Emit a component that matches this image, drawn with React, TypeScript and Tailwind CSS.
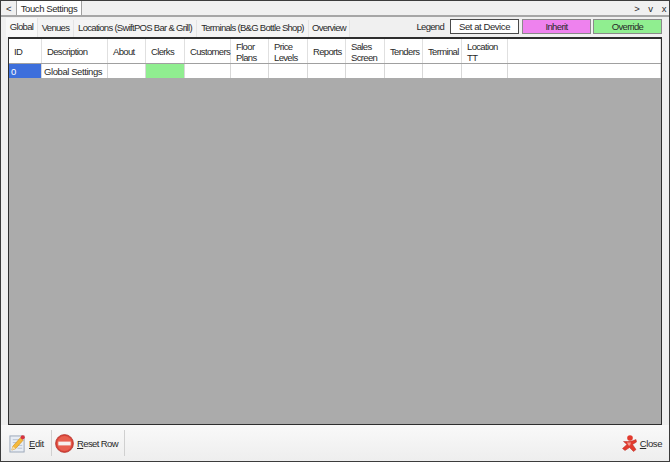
import React from 'react';

const COLUMNS: { label: string[]; width: string; cell?: string; text?: string }[] = [
  { label: ['ID'], width: 'w-[33px]', cell: 'bg-[#3d6fdc] text-white', text: '0' },
  { label: ['Description'], width: 'w-[66px]', text: 'Global Settings' },
  { label: ['About'], width: 'w-[38px]' },
  { label: ['Clerks'], width: 'w-[39px]', cell: 'bg-[#90ee90]' },
  { label: ['Customers'], width: 'w-[46px]' },
  { label: ['Floor', 'Plans'], width: 'w-[38px]' },
  { label: ['Price', 'Levels'], width: 'w-[39px]' },
  { label: ['Reports'], width: 'w-[38px]' },
  { label: ['Sales', 'Screen'], width: 'w-[39px]' },
  { label: ['Tenders'], width: 'w-[38px]' },
  { label: ['Terminal'], width: 'w-[39px]' },
  { label: ['Location', 'TT'], width: 'w-[46px]' },
  { label: [], width: 'flex-1' },
];

const TABS = [
  { label: 'Global', width: 'w-[32px]', active: true },
  { label: 'Venues', width: 'w-[36px]' },
  { label: 'Locations (SwiftPOS Bar & Grill)', width: 'w-[123px]' },
  { label: 'Terminals (B&G Bottle Shop)', width: 'w-[112px]' },
  { label: 'Overview', width: 'w-[41px]' },
];

function EditIcon() {
  return (
    <svg width="17" height="19" viewBox="0 0 18 20">
      <rect x="1" y="2" width="15" height="17" fill="#e8edf4" stroke="#9aa7b8" />
      <path d="M4 6h8M4 9h9M8 12h6M9 15h5" stroke="#b4c0d0" />
      <path d="M3 17l1-4L12 4l3 2.5-8 9z" fill="#f5b93a" stroke="#c98a1c" strokeWidth="0.6" />
      <path d="M3 17l1-4 3 2.5z" fill="#f4dcae" />
      <circle cx="14.5" cy="3.5" r="2.2" fill="#d8343f" />
    </svg>
  );
}

function ResetIcon() {
  return (
    <svg width="19" height="19" viewBox="0 0 20 20">
      <circle cx="10" cy="10" r="9.4" fill="#d9443a" stroke="#b22f28" strokeWidth="0.8" />
      <circle cx="10" cy="10" r="7.8" fill="#e8604f" />
      <rect x="3.5" y="8" width="13" height="4" fill="#f6f1ee" />
    </svg>
  );
}

function CloseIcon() {
  return (
    <svg width="15" height="17" viewBox="0 0 15 17">
      <circle cx="8" cy="3" r="2.8" fill="#e23a2e" />
      <path d="M1.5 6.5L5.5 6.5 L10 6 L14 4.5 L14.5 7 L10.5 9.5 L14 14.5 L11.5 16.5 L7.5 12.5 L3 15.5 L0.5 13.5 L5 9.5 Z" fill="#e23a2e" stroke="#b72a20" strokeWidth="0.5" />
      <path d="M5 7.5h4l-1 3H6.5z" fill="#f59a8e" />
    </svg>
  );
}

export default function App() {
  return (
    <div
      className="w-[670px] h-[462px] flex flex-col overflow-hidden bg-[#f0f0f0] border border-[#3c3c3c] text-[9.5px] leading-[11px] tracking-[-0.42px] text-[#2a2a2a]"
      style={{ fontFamily: '"Liberation Sans", Arial, sans-serif' }}
    >
      {/* Document tab strip */}
      <div className="h-[16px] flex items-stretch border-b-2 border-[#a6a6a6] shrink-0">
        <span className="w-[15px] flex items-center justify-center">&lt;</span>
        <span className="w-[66px] flex items-center justify-center whitespace-nowrap bg-white border-x border-[#a0a0a0]">Touch Settings</span>
        <div className="flex-1" />
        <div className="flex items-center gap-[9px] pr-[3px]">
          <span>&gt;</span>
          <span>v</span>
          <span>x</span>
        </div>
      </div>

      {/* Sub tabs and legend */}
      <div className="h-[20px] flex items-stretch pl-[5px] pr-[7px] shrink-0">
        {TABS.map((tab) => (
          <span
            key={tab.label}
            className={`${tab.width} flex items-center justify-center pb-[3px] whitespace-nowrap tracking-[-0.7px] border-r border-[#e4e4e4] ${tab.active ? 'bg-[#f8f8f8] mt-[1px]' : 'bg-[#f4f4f4] mt-[3px]'}`}
          >
            {tab.label}
          </span>
        ))}
        <div className="flex-1" />
        <div className="flex items-center pb-[1px]">
          <span className="mr-[6px] tracking-[-0.7px]">Legend</span>
          <span className="w-[69px] h-[15px] flex items-center justify-center bg-white border border-[#4a4a4a]">Set at Device</span>
          <span className="ml-[3px] w-[69px] h-[15px] flex items-center justify-center tracking-[-0.6px] bg-[#ee82ee] border border-[#8a8a8a]">Inherit</span>
          <span className="ml-[2px] w-[69px] h-[15px] flex items-center justify-center tracking-[-0.6px] bg-[#90ee90] border border-[#8a8a8a]">Override</span>
        </div>
      </div>

      {/* Grid */}
      <div className="mx-[7px] h-[388px] flex flex-col bg-[#ababab] border border-t-2 border-[#2e2e2e] shrink-0">
        <div className="h-[25px] flex bg-white border-b border-[#a0a0a0] tracking-[-0.65px] shrink-0">
          {COLUMNS.map((col, i) => (
            <div
              key={i}
              className={`${col.width} flex flex-col justify-center pt-[1px] pl-[5px] border-r border-[#e0e0e0]`}
            >
              {col.label.map((line) => (
                <span key={line} className="whitespace-nowrap">{line}</span>
              ))}
            </div>
          ))}
        </div>
        <div className="h-[14px] flex bg-white shrink-0">
          {COLUMNS.map((col, i) => (
            <div key={i} className={`${col.width} flex items-center pl-[2px] pt-[1px] border-r border-[#d8d8d8] whitespace-nowrap ${col.cell ?? ''}`}>
              {col.text}
            </div>
          ))}
        </div>
      </div>

      {/* Bottom toolbar */}
      <div className="flex-1 flex items-center pl-[8px] pr-[7px] bg-linear-to-b from-[#f9f9f9] to-[#eeeeee]">
        <div className="flex items-center w-[43px] h-[26px] border-r border-[#d0d0d0]">
          <EditIcon />
          <span className="ml-[3px]"><u>E</u>dit</span>
        </div>
        <div className="flex items-center w-[73px] h-[26px] pl-[3px] border-r border-[#d0d0d0]">
          <ResetIcon />
          <span className="ml-[3px] tracking-[-0.6px]"><u>R</u>eset Row</span>
        </div>
        <div className="flex-1" />
        <div className="flex items-center gap-[3px]">
          <CloseIcon />
          <span><u>C</u>lose</span>
        </div>
      </div>
    </div>
  );
}
